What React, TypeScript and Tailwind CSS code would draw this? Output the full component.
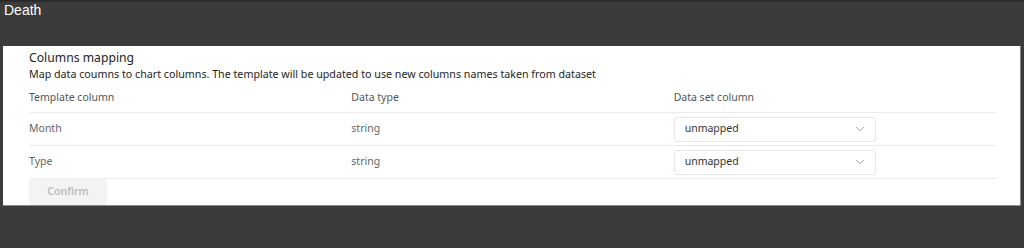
import { ChevronDown } from 'lucide-react';

const rows = [
  { name: 'Month', type: 'string' },
  { name: 'Type', type: 'string' },
];

function Select({ value }: { value: string }) {
  return (
    <div className="flex h-[25px] w-[202px] items-center justify-between rounded-[3px] border border-[#e6e6e6] pl-[10px] pr-[8px] text-[10.5px] text-[#333]">
      <span>{value}</span>
      <ChevronDown className="h-[14px] w-[14px] text-[#777]" strokeWidth={1.2} />
    </div>
  );
}

export default function App() {
  return (
    <div className="min-h-[248px] border-t-2 border-[#2b2b2b] bg-[#3b3b3b] pb-[41px] font-['Segoe_UI','Noto_Sans',sans-serif]">
      <div className="h-[44px] pl-[4px] font-['Liberation_Sans',Arial,sans-serif] text-[14px] leading-[16px] text-white">Death</div>
      <div className="ml-[3px] mr-[3px] border-b border-r border-[#8a8a8a] bg-white pl-[26px] pr-[24px] pt-[3px]">
        <div className="text-[12.2px] leading-[18px] text-[#252525]">Columns mapping</div>
        <div className="text-[10.7px] leading-[15px] text-[#252525]">
          Map data coumns to chart columns. The template will be updated to use new columns names taken from dataset
        </div>
        <div className="grid h-[31px] grid-cols-3 items-center border-b border-[#ececec] pt-[1px] text-[10.5px] text-[#555]">
          <div>Template column</div>
          <div>Data type</div>
          <div>Data set column</div>
        </div>
        {rows.map((r) => (
          <div key={r.name} className="grid h-[33px] grid-cols-3 items-center border-b border-[#ececec] text-[10.5px] text-[#666]">
            <div>{r.name}</div>
            <div>{r.type}</div>
            <div>
              <Select value="unmapped" />
            </div>
          </div>
        ))}
        <div className="flex">
          <button className="h-[26px] w-[78px] rounded-[3px] bg-[#f3f3f3] text-[10.5px] font-semibold text-[#bdbdbd]">Confirm</button>
        </div>
      </div>
    </div>
  );
}
